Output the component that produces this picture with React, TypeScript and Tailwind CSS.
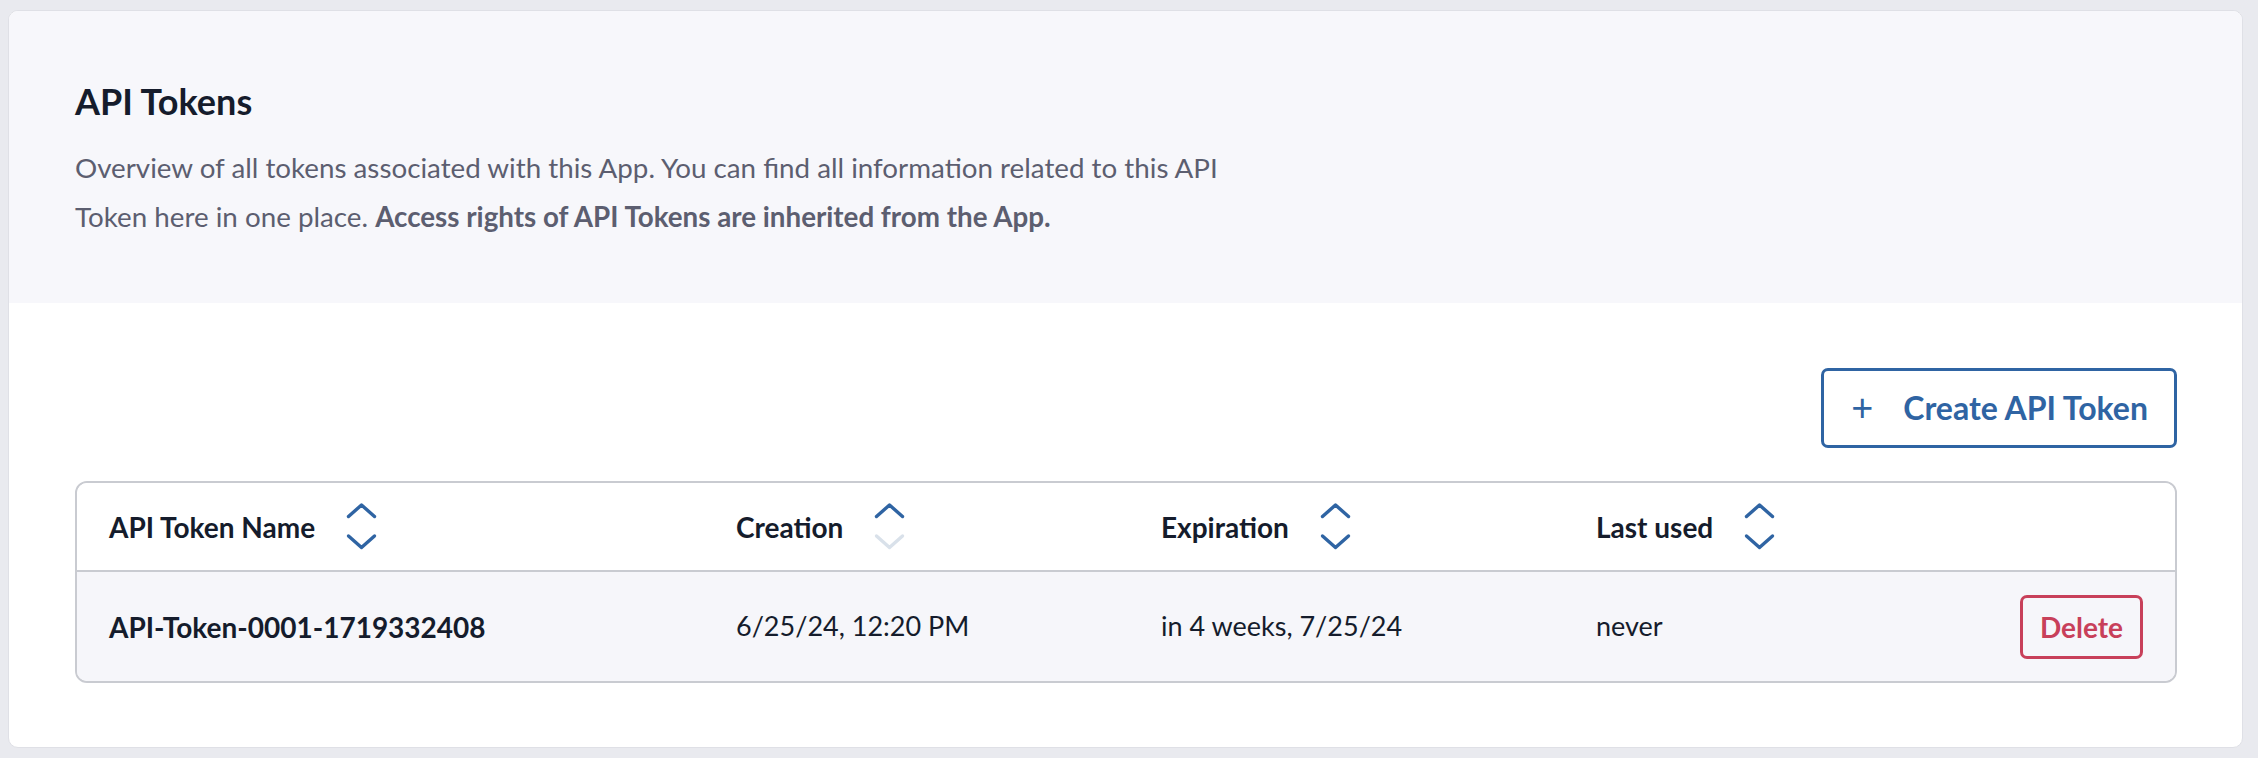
import React from 'react';

const SortIcon = ({ downMuted = false }: { downMuted?: boolean }) => (
  <svg width="31" height="47" viewBox="0 0 31 47" fill="none" className="shrink-0">
    <polyline points="2.5,13.5 15.5,2 28.5,13.5" stroke="#2f64a3" strokeWidth="3.4" strokeLinecap="round" strokeLinejoin="round" />
    <polyline
      points="2.5,33 15.5,44.5 28.5,33"
      stroke={downMuted ? '#d9e1ea' : '#2f64a3'}
      strokeWidth="3.4"
      strokeLinecap="round"
      strokeLinejoin="round"
    />
  </svg>
);

const HeaderCell = ({ label, downMuted }: { label: string; downMuted?: boolean }) => (
  <div className="flex items-center gap-[31px] pl-[32px]">
    <span className="text-[28px] font-bold text-[#151c2c]">{label}</span>
    <SortIcon downMuted={downMuted} />
  </div>
);

const App = () => {
  return (
    <div className="min-h-screen bg-[#e9eaef] pt-[10px] pl-[8px] pr-[15px] pb-[11px] font-['Lato',_'Liberation_Sans',_sans-serif]">
      <div className="bg-white rounded-[10px] border border-[#dfe0e6] overflow-hidden">
        <section className="bg-[#f7f7fb] pl-[66px] pt-[69px] pb-[62px]">
          <h1 className="text-[36px] font-bold leading-[1.2] text-[#151c2c]">API Tokens</h1>
          <p className="mt-[20px] max-w-[1180px] text-[27.75px] leading-[49px] text-[#5c5e70]">
            Overview of all tokens associated with this App. You can find all information related to this API Token
            here in one place. <strong className="font-bold">Access rights of API Tokens are inherited from the App.</strong>
          </p>
        </section>

        <section className="pl-[66px] pr-[65px] pt-[65px] pb-[64px]">
          <div className="flex justify-end">
            <button className="flex items-center gap-[30px] h-[80px] pl-[27px] pr-[26px] border-[3px] border-[#2f64a3] rounded-[7px] text-[#2f64a3] font-bold text-[32px]">
              <span className="text-[38px] font-normal leading-none -mt-[4px]">+</span>
              <span>Create API Token</span>
            </button>
          </div>

          <div className="mt-[33px] border-2 border-[#c9cbd1] rounded-[12px] overflow-hidden">
            <div className="grid grid-cols-[627px_425px_435px_1fr_auto] items-center h-[87px] bg-white">
              <HeaderCell label="API Token Name" />
              <HeaderCell label="Creation" downMuted />
              <HeaderCell label="Expiration" />
              <HeaderCell label="Last used" />
              <div className="pr-[32px]" />
            </div>
            <div className="grid grid-cols-[627px_425px_435px_1fr_auto] items-center h-[111px] bg-[#f6f6fa] border-t-2 border-[#c9cbd1] text-[27px] text-[#151c2c]">
              <div className="pl-[32px] font-bold text-[28px]">API-Token-0001-1719332408</div>
              <div className="pl-[32px]">6/25/24, 12:20 PM</div>
              <div className="pl-[32px]">in 4 weeks, 7/25/24</div>
              <div className="pl-[32px]">never</div>
              <div className="pr-[32px]">
                <button className="h-[64px] px-[17px] border-[3px] border-[#c8405a] rounded-[7px] text-[#c8405a] font-bold text-[28px]">
                  Delete
                </button>
              </div>
            </div>
          </div>
        </section>
      </div>
    </div>
  );
};

export default App;
